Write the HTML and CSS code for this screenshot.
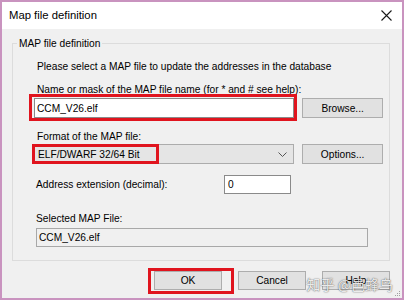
FILE: index.html
```html
<!DOCTYPE html>
<html lang="en">
<head>
  <meta charset="UTF-8" />
  <title>Map file definition</title>
  <link rel="stylesheet" href="styles.css">
</head>
<body>
  <div class="window">
    <div class="titlebar">
      <span class="title">Map file definition</span>
      <svg class="close" width="11" height="11" viewBox="0 0 11 11">
        <path d="M0.5 0.5 L10.5 10.5 M10.5 0.5 L0.5 10.5" stroke="#1a1a1a" stroke-width="1.1" fill="none"/>
      </svg>
    </div>

    <div class="content">
      <fieldset class="group">
        <legend>MAP file definition</legend>
        <div class="group-body">
          <p class="intro">Please select a MAP file to update the addresses in the database</p>

          <p class="label first">Name or mask of the MAP file name (for * and # see help):</p>
          <div class="row">
            <div class="field textbox">CCM_V26.elf<span class="mark mark-name"></span></div>
            <div class="btn btn-side">Browse...</div>
          </div>

          <p class="label">Format of the MAP file:</p>
          <div class="row combo-row">
            <div class="field combo">
              <span>ELF/DWARF 32/64 Bit</span>
              <svg class="chevron" width="9" height="5" viewBox="0 0 9 5">
                <path d="M0.5 0.5 L4.5 4.5 L8.5 0.5" stroke="#555" stroke-width="1" fill="none"/>
              </svg>
              <span class="mark mark-combo"></span>
            </div>
            <div class="btn btn-side">Options...</div>
          </div>

          <div class="row ext-row">
            <span class="ext-label">Address extension (decimal):</span>
            <div class="textbox ext-box">0</div>
          </div>

          <p class="label selected">Selected MAP File:</p>
          <div class="readonly">CCM_V26.elf</div>
        </div>
      </fieldset>

      <div class="buttons">
        <div class="btn btn-ok">OK<span class="mark mark-ok"></span></div>
        <div class="btn">Cancel</div>
        <div class="btn">Help</div>
      </div>
    </div>

    <div class="watermark">知乎 @邑蜂鸟</div>
    <svg class="grip" width="7" height="7" viewBox="0 0 7 7">
      <rect x="5" y="1" width="1" height="1" fill="#a0a0a0"/>
      <rect x="3" y="3" width="1" height="1" fill="#a0a0a0"/>
      <rect x="5" y="3" width="1" height="1" fill="#a0a0a0"/>
      <rect x="1" y="5" width="1" height="1" fill="#a0a0a0"/>
      <rect x="3" y="5" width="1" height="1" fill="#a0a0a0"/>
      <rect x="5" y="5" width="1" height="1" fill="#a0a0a0"/>
    </svg>
  </div>
</body>
</html>
```

FILE: styles.css
```css
* {
  box-sizing: border-box;
}

body {
  margin: 0;
  background: #fff;
  font-family: "Liberation Sans", Arial, sans-serif;
  font-size: 10.2px;
  line-height: 13px;
  color: #000;
}

.window {
  position: relative;
  width: 404px;
  height: 300px;
  border: 2px solid #c993bf;
  background: #f0f0f0;
  display: flex;
  flex-direction: column;
}

.titlebar {
  height: 27px;
  background: #fff;
  display: flex;
  align-items: center;
  justify-content: space-between;
  padding: 0 10px 0 7px;
}

.title {
  font-size: 11.3px;
}

.content {
  flex: 1;
  padding: 8px 12px 0 10px;
}

.group {
  margin: 0;
  padding: 0;
  border: 1px solid #dcdcdc;
  min-width: 0;
}

.group legend {
  margin-left: 4px;
  padding: 0 2px;
}

.group-body {
  display: flex;
  flex-direction: column;
  padding: 0 6px 13px 21px;
}

.intro {
  margin: 10px 0 0 3px;
}

.label {
  margin: 12px 0 0 3px;
}

.label.first {
  margin-top: 10px;
}

.label.selected {
  margin: 18px 0 0 2px;
}

.row {
  display: flex;
  align-items: center;
  gap: 8px;
  margin-top: 2px;
}

.combo-row {
  margin-top: 1px;
}

.field {
  position: relative;
  width: 261px;
  height: 20px;
}

.textbox {
  background: #fff;
  border: 1px solid #8a8a8a;
  padding: 3px 2px;
}

.combo {
  background: #e5e5e5;
  border: 1px solid #acacac;
  display: flex;
  align-items: center;
  justify-content: space-between;
  padding: 0 6px 0 3px;
}

.btn {
  position: relative;
  width: 68px;
  height: 19px;
  background: #e1e1e1;
  border: 1px solid #adadad;
  display: flex;
  align-items: center;
  justify-content: center;
}

.btn-side {
  width: 81px;
  height: 20px;
}

.ext-row {
  margin-top: 11px;
  gap: 0;
}

.ext-label {
  width: 190px;
  padding-left: 2px;
}

.ext-box {
  width: 67px;
  height: 19px;
  padding: 2px 3px;
}

.readonly {
  margin: 3px 0 0 2px;
  width: 332px;
  height: 19px;
  border: 1px solid #a8a8a8;
  padding: 2px 2px;
}

.buttons {
  display: flex;
  justify-content: flex-end;
  gap: 16px;
  margin-top: 10px;
}

/* red annotation frames drawn over the controls */
.mark {
  position: absolute;
  border: 3px solid #e0141e;
}

.mark-name {
  top: -5px;
  left: -6px;
  right: -4px;
  bottom: -4px;
}

.mark-combo {
  top: -1px;
  left: -3px;
  width: 127px;
  bottom: -1px;
}

.mark-ok {
  top: -4px;
  left: -7px;
  right: -13px;
  bottom: -5px;
}

.watermark {
  position: absolute;
  right: 9px;
  bottom: 7px;
  font-family: "Noto Sans CJK SC", sans-serif;
  font-size: 14px;
  color: rgba(255, 255, 255, 0.9);
  text-shadow: 0 0 1px rgba(0, 0, 0, 0.6), 0 0 2px rgba(0, 0, 0, 0.35);
}

.grip {
  position: absolute;
  right: 1px;
  bottom: 1px;
}
```
